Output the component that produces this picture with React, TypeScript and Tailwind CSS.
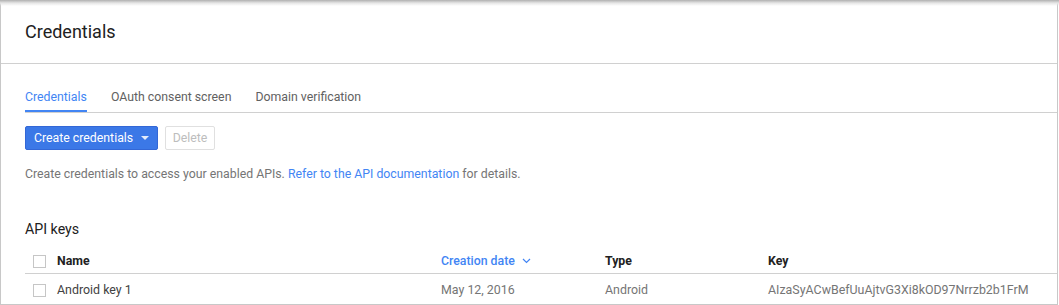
import React from "react";

const font = { fontFamily: "Roboto, 'Liberation Sans', sans-serif" };

function Box() {
  return <div className="w-[13px] h-[13px] border border-[#c6c6c6] bg-white" />;
}

export default function App() {
  return (
    <div className="relative w-[1059px] h-[305px] bg-white overflow-hidden" style={font}>
      <div className="absolute left-0 top-0 right-0 h-[6px] bg-gradient-to-b from-[#b0b0b0] via-[#e6e6e6] to-transparent" />
      <div className="w-[1058px] h-[305px] border-l border-r border-b border-[#c8c8c8] flex flex-col">
        <div className="h-[64px] border-b border-[#d0d0d0] flex items-center px-[24px] shrink-0">
          <h1 className="text-[18px] text-[#212121] leading-none pt-[1px]">Credentials</h1>
        </div>
        <div className="pl-[24px]">
          <div className="flex gap-[24px] border-b border-[#d0d0d0] pt-[25px] text-[12.3px] leading-[16px]">
            <div className="text-[#4285f4] border-b-2 border-[#4285f4] pb-[5px]">Credentials</div>
            <div className="text-[#616161] pb-[7px]">OAuth consent screen</div>
            <div className="text-[#616161] pb-[7px]">Domain verification</div>
          </div>
          <div className="flex gap-[7px] mt-[13px]">
            <button className="h-[24px] w-[133px] bg-[#3b78e7] border border-[#3367d6] rounded-[2px] text-white text-[12.3px] flex items-center pl-[8px] gap-[8px]">
              <span>Create credentials</span>
              <svg width="8" height="4" viewBox="0 0 8 4"><path d="M0 0h8L4 4z" fill="#e3ecfb" /></svg>
            </button>
            <button className="h-[24px] w-[50px] border border-[#e0e0e0] rounded-[2px] text-[#bdbdbd] text-[12.3px] bg-white">Delete</button>
          </div>
          <p className="mt-[16px] text-[12.3px] leading-[16px] text-[#757575]">
            Create credentials to access your enabled APIs.{" "}
            <span className="text-[#4285f4]">Refer to the API documentation</span> for details.
          </p>
          <h2 className="mt-[37px] text-[14.2px] leading-[20px] text-[#212121]">API keys</h2>
          <div className="text-[12.3px] leading-[16px]">
            <div className="flex items-center border-b border-[#d0d0d0] pt-[14px] pb-[4px]">
              <div className="w-[32px] pl-[8px]"><Box /></div>
              <div className="w-[384px] font-bold text-[#212121]">Name</div>
              <div className="w-[164px] font-medium text-[#4285f4] flex items-center gap-[7px]">
                <span>Creation date</span>
                <svg width="9" height="6" viewBox="0 0 9 6"><path d="M1 1l3.5 3.5L8 1" stroke="#4285f4" strokeWidth="1.2" fill="none" /></svg>
              </div>
              <div className="w-[163px] font-bold text-[#212121]">Type</div>
              <div className="font-bold text-[#212121]">Key</div>
            </div>
            <div className="flex items-center pt-[8px] pb-[5px] text-[#616161] text-[12.4px]">
              <div className="w-[32px] pl-[8px]"><Box /></div>
              <div className="w-[384px] text-[#424242]">Android key 1</div>
              <div className="w-[164px] text-[#757575]">May 12, 2016</div>
              <div className="w-[163px] text-[#757575]">Android</div>
              <div className="text-[#757575]">AIzaSyACwBefUuAjtvG3Xi8kOD97Nrrzb2b1FrM</div>
            </div>
          </div>
        </div>
      </div>
    </div>
  );
}
